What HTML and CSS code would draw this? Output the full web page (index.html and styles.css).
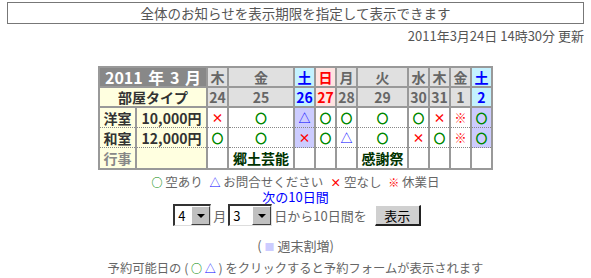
FILE: index.html
```html
<!DOCTYPE html>
<html lang="ja">
<head>
<meta charset="utf-8">
<title>空室カレンダー</title>
<link rel="stylesheet" href="styles.css">
</head>
<body>
<div class="notice">全体のお知らせを表示期限を指定して表示できます</div>
<div class="updated">2011年3月24日 14時30分 更新</div>

<table class="cal">
  <colgroup>
    <col class="c-a"><col class="c-b"><col class="c-n"><col class="c-w1"><col class="c-n"><col class="c-n"><col class="c-n"><col class="c-w2"><col class="c-n"><col class="c-n"><col class="c-n"><col class="c-n">
  </colgroup>
  <tr class="r-head">
    <th colspan="2" class="ym">2011 年 3 月</th>
    <th class="wd">木</th><th class="wd">金</th><th class="wd sat">土</th><th class="wd sun">日</th><th class="wd">月</th><th class="wd">火</th><th class="wd">水</th><th class="wd">木</th><th class="wd">金</th><th class="wd sat">土</th>
  </tr>
  <tr class="r-head">
    <th colspan="2" class="type">部屋タイプ</th>
    <th class="wd">24</th><th class="wd">25</th><th class="wd sat">26</th><th class="wd sun">27</th><th class="wd">28</th><th class="wd">29</th><th class="wd">30</th><th class="wd">31</th><th class="wd">1</th><th class="wd sat">2</th>
  </tr>
  <tr class="r-data">
    <th class="room">洋室</th><th class="price">10,000円</th>
    <td><span class="x">×</span></td><td><span class="o">○</span></td><td class="we"><span class="t">△</span></td><td><span class="o">○</span></td><td><span class="o">○</span></td><td><span class="o">○</span></td><td><span class="o">○</span></td><td><span class="x">×</span></td><td><span class="k">※</span></td><td class="we"><span class="o">○</span></td>
  </tr>
  <tr class="r-data">
    <th class="room">和室</th><th class="price">12,000円</th>
    <td><span class="o">○</span></td><td><span class="o">○</span></td><td class="we"><span class="x">×</span></td><td><span class="o">○</span></td><td><span class="t">△</span></td><td><span class="o">○</span></td><td><span class="x">×</span></td><td><span class="o">○</span></td><td><span class="k">※</span></td><td class="we"><span class="o">○</span></td>
  </tr>
  <tr class="r-event">
    <th class="ev-label">行事</th><th class="ev-blank"></th>
    <td></td><td class="ev">郷土芸能</td><td></td><td></td><td></td><td class="ev">感謝祭</td><td></td><td></td><td></td><td></td>
  </tr>
</table>

<div class="legend"><span class="o">○</span> 空あり <span class="t gap">△</span> お問合せください <span class="x gap">×</span> 空なし <span class="k gap">※</span> 休業日</div>
<div class="next"><a class="next-link" href="#">次の10日間</a></div>
<form class="picker">
  <span class="sel sel-m"><select class="sel-input"><option>4</option></select><span class="sel-btn"><span class="tri"></span></span></span>
  <span class="lbl">月</span>
  <span class="sel sel-d"><select class="sel-input"><option>3</option></select><span class="sel-btn"><span class="tri"></span></span></span>
  <span class="lbl">日から10日間を</span>
  <button type="button" class="show-btn">表示</button>
</form>
<div class="weekend">( <span class="sq">■</span> 週末割増)</div>
<div class="hint">予約可能日の ( <span class="o">○</span> <span class="t">△</span> ) をクリックすると予約フォームが表示されます</div>
</body>
</html>
```
FILE: styles.css
```css
html, body {
  margin: 0;
  background: #fff;
}
body {
  padding: 2px 7px 0;
  font-family: "Noto Sans CJK JP", "Noto Sans", sans-serif;
  font-size: 13px;
  color: #666;
}
.notice {
  border: 1px solid #777;
  height: 20px;
  line-height: 20px;
  text-align: center;
  color: #555;
  font-size: 13.5px;
}
.updated {
  text-align: right;
  line-height: 16px;
  margin-top: 4px;
  color: #555;
}
.cal {
  margin: 22px auto 0;
  border-collapse: collapse;
  table-layout: fixed;
  width: 390px;
  border: 2px solid #999;
}
.c-a { width: 37px; }
.c-b { width: 71px; }
.c-n { width: 21px; }
.c-w1 { width: 66px; }
.c-w2 { width: 51px; }
.cal th, .cal td {
  padding: 0;
  text-align: center;
  vertical-align: middle;
  border-left: 2px solid #999;
  border-right: 2px solid #999;
  white-space: nowrap;
  font-size: 14px;
  line-height: 16px;
}
.r-head th {
  border-bottom: 2px solid #999;
  height: 18px;
}
.r-data th, .r-data td {
  border-bottom: 1px dotted #888;
  height: 19px;
}
.r-event th, .r-event td {
  height: 20px;
}
.cal .ym {
  background: #888;
  color: #fff;
  font-size: 16px;
  line-height: 18px;
  font-weight: bold;
  word-spacing: 2px;
}
.wd {
  background: #e0e0e0;
  color: #666;
  font-weight: bold;
}
.wd.sat {
  background: #c4f2ff;
  color: #00f;
}
.wd.sun {
  background: #ffe4e1;
  color: #f00;
}
.type, .room, .price, .ev-label, .ev-blank {
  background: #ffffe0;
  color: #333;
  font-weight: bold;
}
.ev-label {
  color: #888;
}
.ev {
  color: #030;
  font-weight: bold;
}
.we {
  background: #ccf;
}
.o { color: #080; font-weight: bold; }
.t { color: #00f; }
.x { color: #f00; font-weight: bold; }
.k { color: #f00; }
.cal .o, .cal .t, .cal .x, .cal .k {
  font-size: 12px;
}
.cal .o {
  font-size: 11px;
  -webkit-text-stroke: 0.8px #080;
}
.gap {
  margin-left: 4px;
}
.legend {
  text-align: center;
  margin-top: 4px;
  line-height: 15px;
  font-size: 12.5px;
}
.legend .o, .legend .t, .legend .x, .legend .k {
  font-size: 11px;
}
.next {
  text-align: center;
  line-height: 14px;
}
.next-link {
  color: #00f;
  text-decoration: none;
}
.picker {
  margin: 0;
  display: flex;
  justify-content: center;
  align-items: center;
  gap: 2px;
  height: 22px;
}
.sel {
  display: inline-flex;
  align-items: stretch;
  height: 22px;
  box-sizing: border-box;
  border-top: 2px solid #333;
  border-left: 2px solid #333;
  border-right: 1px solid #ddd;
  border-bottom: 1px solid #ddd;
  background: #fff;
}
.sel-m { width: 38px; margin-left: 3px; }
.sel-d { width: 44px; }
.sel-input {
  appearance: none;
  -webkit-appearance: none;
  border: 0;
  margin: 0;
  padding: 0 0 0 3px;
  background: #fff;
  font: 13px "Noto Sans CJK JP", sans-serif;
  color: #000;
  flex: 1;
  min-width: 0;
  outline: none;
}
.sel-btn {
  width: 19px;
  box-sizing: border-box;
  background: #c0c0c0;
  border-top: 1px solid #fff;
  border-left: 1px solid #fff;
  border-right: 1px solid #404040;
  border-bottom: 1px solid #404040;
  display: flex;
  align-items: center;
  justify-content: center;
}
.tri {
  width: 0;
  height: 0;
  border-left: 4px solid transparent;
  border-right: 4px solid transparent;
  border-top: 4px solid #000;
}
.lbl {
  color: #666;
}
.show-btn {
  margin-left: 6px;
  width: 46px;
  height: 21px;
  padding: 0;
  box-sizing: border-box;
  background: #d0d0d0;
  border-top: 1px solid #fff;
  border-left: 1px solid #fff;
  border-right: 2px solid #222;
  border-bottom: 2px solid #222;
  font: 13px "Noto Sans CJK JP", sans-serif;
  color: #000;
}
.weekend {
  text-align: center;
  margin-top: 12px;
  line-height: 15px;
}
.sq {
  color: #ccf;
  font-size: 10px;
}
.hint {
  text-align: center;
  margin-top: 7px;
  line-height: 15px;
  font-size: 12.3px;
}
.hint .o, .hint .t {
  font-size: 11px;
}
```
